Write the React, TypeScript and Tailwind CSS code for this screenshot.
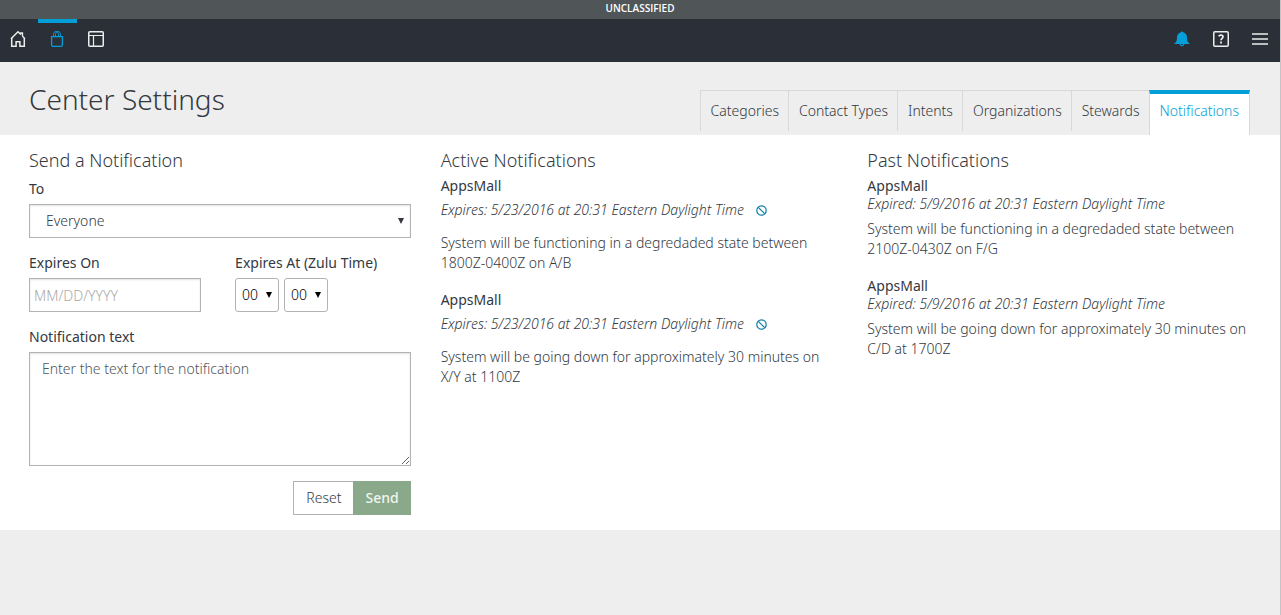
import React from "react";

const tabs = ["Categories", "Contact Types", "Intents", "Organizations", "Stewards", "Notifications"];

const active = [
  {
    source: "AppsMall",
    when: "Expires: 5/23/2016 at 20:31 Eastern Daylight Time",
    text: "System will be functioning in a degredaded state between 1800Z-0400Z on A/B",
  },
  {
    source: "AppsMall",
    when: "Expires: 5/23/2016 at 20:31 Eastern Daylight Time",
    text: "System will be going down for approximately 30 minutes on X/Y at 1100Z",
  },
];

const past = [
  {
    source: "AppsMall",
    when: "Expired: 5/9/2016 at 20:31 Eastern Daylight Time",
    text: "System will be functioning in a degredaded state between 2100Z-0430Z on F/G",
  },
  {
    source: "AppsMall",
    when: "Expired: 5/9/2016 at 20:31 Eastern Daylight Time",
    text: "System will be going down for approximately 30 minutes on C/D at 1700Z",
  },
];

function HomeIcon() {
  return (
    <svg width="16" height="18" viewBox="0 0 16 18" fill="none" stroke="currentColor" strokeWidth="1.5" aria-hidden="true">
      <path d="M1.7 8v8.200h4.400v-4.400h3.800v4.400h4.400V8" />
      <path d="M1 8.800 8 1.700l2.800 2.900" />
      <path d="M10.800 4.500V3h1.700v3.200L15 8.800" strokeWidth="1.300" />
    </svg>
  );
}

function BagIcon() {
  return (
    <svg width="14" height="18" viewBox="0 0 14 18" fill="none" stroke="currentColor" strokeWidth="1.3" aria-hidden="true">
      <path d="M1.600 6.600h10.800v8.200a1.600 1.600 0 0 1-1.600 1.600H3.200a1.600 1.600 0 0 1-1.600-1.600z" />
      <path d="M3.500 6.600V4.500c0-4 5-4 5 0v2.100M5.500 6.600V4.500c0-4 5-4 5 0v2.100" strokeWidth="1" />
    </svg>
  );
}

function LayoutIcon() {
  return (
    <svg width="16" height="16" viewBox="0 0 16 16" fill="none" stroke="currentColor" aria-hidden="true">
      <rect x="0.750" y="0.750" width="14.500" height="14.500" rx="1" strokeWidth="1.500" />
      <path d="M1 4.500h14M5.500 4.500V15" strokeWidth="1.200" />
    </svg>
  );
}

function BellIcon() {
  return (
    <svg width="16" height="16" viewBox="0 0 16 16" fill="currentColor" aria-hidden="true">
      <path d="M8 0.500c.8 0 1.200.4 1.500.9C12 2.100 13 4.200 13 6.500c0 3.200.7 4.600 2.600 6v.6H.4v-.6C2.300 11.100 3 9.700 3 6.500c0-2.300 1-4.400 3.500-5.100C6.800.9 7.200.500 8 .500z" />
      <path d="M6.300 12.500a1.750 1.750 0 1 0 3.400 0" fill="none" stroke="currentColor" strokeWidth="1.200" />
    </svg>
  );
}

function HelpIcon() {
  return (
    <svg width="16" height="16" viewBox="0 0 16 16" fill="none" stroke="currentColor" aria-hidden="true">
      <rect x="0.750" y="0.750" width="14.500" height="14.500" rx="1.200" strokeWidth="1.500" />
      <path d="M5.700 5.300C6.400 3.800 10 3.600 10 5.800 10 7.400 8 7.500 8 9.300" strokeWidth="1.700" />
      <path d="M8 10.600v1.800" strokeWidth="1.800" />
    </svg>
  );
}

function MenuIcon() {
  return (
    <svg width="16" height="12" viewBox="0 0 16 12" stroke="currentColor" aria-hidden="true">
      <path d="M0 1h16M0 6h16M0 11h16" strokeWidth="1.500" />
    </svg>
  );
}

function BanIcon() {
  return (
    <svg width="11" height="11" viewBox="0 0 11 11" fill="none" stroke="currentColor" strokeWidth="1.200" aria-hidden="true">
      <circle cx="5.500" cy="5.500" r="4.700" />
      <path d="m2.300 2.300 6.400 6.400" />
    </svg>
  );
}

function Caret() {
  return (
    <svg width="6" height="6" viewBox="0 0 6 6" className="pointer-events-none absolute top-1/2 right-[7px] -translate-y-1/2" fill="currentColor" aria-hidden="true">
      <path d="M0 0h6L3 6z" />
    </svg>
  );
}

function TimeSelect({ label }: { label: string }) {
  return (
    <span className="relative block text-black">
      <select aria-label={label} defaultValue="00" className="h-[34px] w-11 appearance-none rounded-[3px] border border-[#b3b3b3] bg-white pl-[6px]">
        <option>00</option>
      </select>
      <Caret />
    </span>
  );
}

const heading = "text-lg leading-5 font-light";
const label = "block leading-5";

export default function App() {
  return (
    <div className="min-h-screen border-r border-[#c4c4c6] bg-[#eeeeee] font-['Noto_Sans',sans-serif] text-sm leading-5 text-[#33393f]">
      <div className="h-[19px] bg-[#505557] text-center font-['Open_Sans',sans-serif] text-[10px] leading-[17px] font-semibold text-white">UNCLASSIFIED</div>
      <nav className="flex h-[43px] justify-between bg-[#2b2f37] text-[#ededed]">
        <div className="flex">
          <a href="#home" aria-label="Home" className="flex w-[38px] items-center justify-center pr-[2px] pb-[3px]"><HomeIcon /></a>
          <a href="#center" aria-label="Center" className="flex w-[39px] items-center justify-center border-t-4 border-[#049fd9] pr-px pb-[7px] text-[#049fd9]"><BagIcon /></a>
          <a href="#webtop" aria-label="Webtop" className="flex w-[39px] items-center justify-center pr-px pb-[3px]"><LayoutIcon /></a>
        </div>
        <div className="flex">
          <button type="button" aria-label="Notifications" className="flex w-[39px] items-center justify-center pr-px pb-[3px] text-[#049fd9]"><BellIcon /></button>
          <button type="button" aria-label="Help" className="flex w-[39px] items-center justify-center pr-px pb-[3px]"><HelpIcon /></button>
          <button type="button" aria-label="Menu" className="flex w-[39px] items-center justify-center pr-px pb-[3px]"><MenuIcon /></button>
        </div>
      </nav>
      <header className="flex h-[73px] items-end justify-between pr-[30px] pl-[29px]">
        <h1 className="pb-5 text-[28px] leading-8 font-light">Center Settings</h1>
        <div className="flex h-[45px] items-start font-light">
          {tabs.map((tab) =>
            tab === "Notifications" ? (
              <a key={tab} href="#tab" aria-current="page" className="h-[45px] border-x border-t-4 border-x-[#d8d8d8] border-t-[#049fd9] bg-white px-[10px] pt-[7px] text-[#049fd9]">{tab}</a>
            ) : (
              <a key={tab} href="#tab" className="h-[41px] border-t border-l border-[#d8d8d8] pt-[10px] pr-[9px] pl-[10px]">{tab}</a>
            ),
          )}
        </div>
      </header>
      <main className="grid grid-cols-3 bg-white pt-[15px] pb-[15px]">
        <form className="pr-4 pl-[29px]" onSubmit={(e) => e.preventDefault()}>
          <h2 className={heading}>Send a Notification</h2>
          <label htmlFor="to" className="mt-[9px] block leading-5">To</label>
          <div className="relative mt-[5px]">
            <select id="to" className="block h-[34px] w-full appearance-none border border-[#b3b3b3] bg-white pl-4 font-light shadow-[inset_0_1px_2px_rgba(0,0,0,0.12)]">
              <option>Everyone</option>
            </select>
            <Caret />
          </div>
          <div className="mt-[15px] flex">
            <div className="w-[54%] pr-[34px]">
              <label htmlFor="expires" className={label}>Expires On</label>
              <input id="expires" placeholder="MM/DD/YYYY" className="mt-[5px] block h-[34px] w-full border border-[#b3b3b3] bg-white px-1 text-sm font-light shadow-[inset_0_1px_2px_rgba(0,0,0,0.12)] placeholder:text-[#a9a9a9]" />
            </div>
            <fieldset>
              <legend className={label}>Expires At (Zulu Time)</legend>
              <div className="mt-[5px] flex gap-[5px] font-light">
                <TimeSelect label="Hours" />
                <TimeSelect label="Minutes" />
              </div>
            </fieldset>
          </div>
          <label htmlFor="text" className="mt-[15px] block leading-5">Notification text</label>
          <textarea id="text" placeholder="Enter the text for the notification" className="mt-[5px] block h-[114px] w-full resize border border-[#b3b3b3] bg-white px-3 py-[6px] font-light shadow-[inset_0_1px_2px_rgba(0,0,0,0.12)] placeholder:text-[#50565c]" />
          <div className="mt-[15px] flex justify-end">
            <button type="reset" className="h-[34px] border border-r-0 border-[#b3b3b3] px-3 font-light">Reset</button>
            <button type="submit" className="h-[34px] bg-[#89a98a] px-3 font-medium text-[#f0f4f0]">Send</button>
          </div>
        </form>
        <section className="px-[14px]">
          <h2 className={heading}>Active Notifications</h2>
          <div className="mt-[6px] flex flex-col gap-[17px]">
            {active.map((n) => (
              <article key={n.text}>
                <h3 className="leading-5">{n.source}</h3>
                <div className="mt-[4px] flex items-center gap-3 font-light">
                  <em>{n.when}</em>
                  <button type="button" aria-label="Stop notification" className="text-[#0a7ea8]"><BanIcon /></button>
                </div>
                <p className="mt-[13px] pr-1 font-light">{n.text}</p>
              </article>
            ))}
          </div>
        </section>
        <section className="px-[14px]">
          <h2 className={heading}>Past Notifications</h2>
          <div className="mt-[6px] flex flex-col gap-[17px]">
            {past.map((n) => (
              <article key={n.text}>
                <h3 className="leading-5">{n.source}</h3>
                <em className="block leading-4 font-light">{n.when}</em>
                <p className="mt-[7px] pr-1 font-light">{n.text}</p>
              </article>
            ))}
          </div>
        </section>
      </main>
    </div>
  );
}
